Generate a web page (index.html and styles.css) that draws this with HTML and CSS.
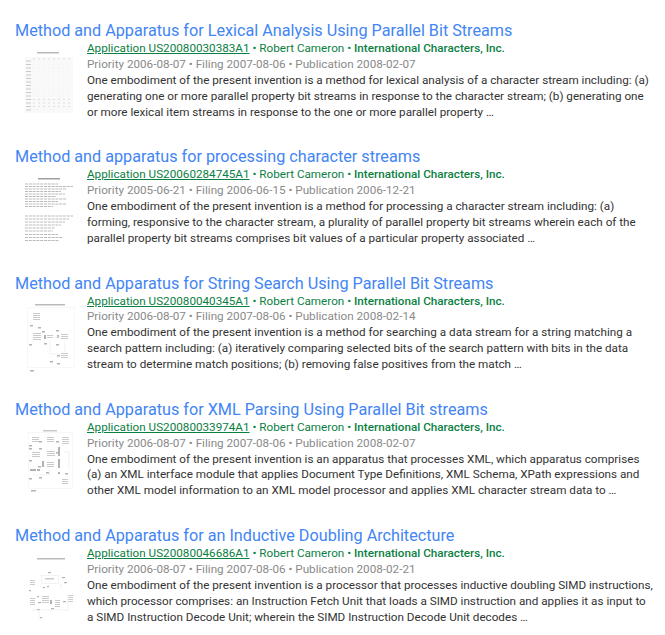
FILE: index.html
```html
<!DOCTYPE html>
<html lang="en">
<head>
<meta charset="utf-8">
<title>Patent results</title>
<link rel="stylesheet" href="styles.css">
</head>
<body>
<main class="results">
<article class="result">
  <h2 class="title">Method and Apparatus for Lexical Analysis Using Parallel Bit Streams</h2>
  <div class="row">
    <svg class="thumb" viewBox="0 0 52 72" aria-hidden="true">
      <rect x="14" y="0" width="22" height="1.5" fill="#aaa"/>
      <rect x="2" y="5" width="48" height="56" fill="#f8f8f8"/>
      <g stroke="#bdbdbd" stroke-width="1.1" stroke-dasharray="5 50"><path d="M3 9H50M3 12.500H50M3 16H50M3 19.500H50M3 23H50M3 26.500H50M3 30H50M3 33.500H50M3 37H50M3 40.500H50M3 44H50M3 47.500H50M3 51H50M3 54.500H50M3 58H50"/></g>
      <g stroke="#d8d8d8" stroke-width="1" stroke-dasharray="2 3"><path d="M10 7H50M10 47.500H50M10 51H50M10 54.500H50"/></g>
      <g stroke="#ececec" stroke-width=".8" stroke-dasharray="1 4"><path d="M10 12.500H50M10 16H50M10 19.500H50M10 23H50M10 26.500H50M10 30H50M10 33.500H50M10 37H50M10 40.500H50M10 44H50M10 58H50"/></g>
    </svg>
    <div class="info">
      <p class="meta"><a class="app" href="#">Application US20080030383A1</a> • Robert Cameron • <b>International Characters, Inc.</b></p>
      <p class="dates">Priority 2006-08-07 • Filing 2007-08-06 • Publication 2008-02-07</p>
      <p class="abstract">One embodiment of the present invention is a method for lexical analysis of a character stream including: (a) generating one or more parallel property bit streams in response to the character stream; (b) generating one or more lexical item streams in response to the one or more parallel property …</p>
    </div>
  </div>
</article>
<article class="result">
  <h2 class="title">Method and apparatus for processing character streams</h2>
  <div class="row">
    <svg class="thumb" viewBox="0 0 52 72" aria-hidden="true">
      <rect x="15" y="0" width="22" height="1.5" fill="#888"/>
      <g stroke="#aaa" stroke-width="1" stroke-dasharray="3 .8"><path d="M2 6H36M2 8.500H50M2 11H44M2 13.500H38M2 16H42M2 18.500H33M2 21H44M2 23.500H35M2 26H44M2 28.500H30M2 38H50M2 41H46M2 44H42M2 47H38M2 50H32M2 53H30M2 56.500H35M2 59.500H40M2 62.500H36"/></g>
    </svg>
    <div class="info">
      <p class="meta"><a class="app" href="#">Application US20060284745A1</a> • Robert Cameron • <b>International Characters, Inc.</b></p>
      <p class="dates">Priority 2005-06-21 • Filing 2006-06-15 • Publication 2006-12-21</p>
      <p class="abstract">One embodiment of the present invention is a method for processing a character stream including: (a) forming, responsive to the character stream, a plurality of parallel property bit streams wherein each of the parallel property bit streams comprises bit values of a particular property associated …</p>
    </div>
  </div>
</article>
<article class="result">
  <h2 class="title">Method and Apparatus for String Search Using Parallel Bit Streams</h2>
  <div class="row">
    <svg class="thumb" viewBox="0 0 52 72" aria-hidden="true">
      <rect x="12" y="0" width="30" height="1.5" fill="#aaa"/>
      <rect x="4.500" y="3.500" width="47" height="60" fill="none" stroke="#f6f6f6"/>
      <g fill="#bdbdbd"><rect x="10" y="9" width="7" height="1"/><rect x="10" y="11" width="7" height="1"/><rect x="10" y="13" width="7" height="1"/><rect x="10" y="15" width="7" height="1"/><rect x="10" y="29" width="8" height="1"/><rect x="10" y="31" width="8" height="1"/><rect x="10" y="33" width="8" height="1"/><rect x="10" y="35" width="8" height="1"/><rect x="24" y="31" width="6" height="1"/><rect x="24" y="33" width="6" height="1"/><rect x="38" y="30" width="7" height="1"/><rect x="38" y="32" width="7" height="1"/><rect x="38" y="34" width="7" height="1"/><rect x="38" y="49" width="7" height="1"/><rect x="38" y="51" width="7" height="1"/><rect x="38" y="53" width="7" height="1"/></g>
      <g fill="#a0a0a0"><rect x="7" y="21" width="3" height="1.500"/><rect x="15" y="23" width="3" height="1.500"/><rect x="19" y="27" width="3" height="1.500"/><rect x="21" y="31" width="2" height="4"/><rect x="33" y="26" width="3" height="1.500"/><rect x="34" y="31" width="2" height="3"/><rect x="6" y="40" width="3" height="1.500"/><rect x="21" y="39" width="3" height="1.500"/><rect x="33" y="40" width="3" height="1.500"/><rect x="27" y="57" width="3" height="1.500"/><rect x="34" y="51" width="3" height="1.500"/><rect x="34" y="59" width="3" height="1.500"/><rect x="7" y="66" width="4" height="1.500"/></g>
      <path d="M31 33H37M27 36V50H37M42 37V48" fill="none" stroke="#e6e6e6" stroke-width=".7"/>
    </svg>
    <div class="info">
      <p class="meta"><a class="app" href="#">Application US20080040345A1</a> • Robert Cameron • <b>International Characters, Inc.</b></p>
      <p class="dates">Priority 2006-08-07 • Filing 2007-08-06 • Publication 2008-02-14</p>
      <p class="abstract">One embodiment of the present invention is a method for searching a data stream for a string matching a search pattern including: (a) iteratively comparing selected bits of the search pattern with bits in the data stream to determine match positions; (b) removing false positives from the match …</p>
    </div>
  </div>
</article>
<article class="result">
  <h2 class="title">Method and Apparatus for XML Parsing Using Parallel Bit streams</h2>
  <div class="row">
    <svg class="thumb" viewBox="0 0 52 72" aria-hidden="true">
      <rect x="20" y="0" width="14" height="1.500" fill="#bbb"/>
      <rect x="5.500" y="2.500" width="44" height="56" fill="none" stroke="#f6f6f6"/>
      <g fill="#bdbdbd"><rect x="9" y="7" width="7" height="1"/><rect x="9" y="9" width="7" height="1"/><rect x="9" y="11" width="7" height="1"/><rect x="24" y="7" width="7" height="1"/><rect x="24" y="9" width="7" height="1"/><rect x="24" y="11" width="7" height="1"/><rect x="39" y="7" width="7" height="1"/><rect x="39" y="9" width="7" height="1"/><rect x="39" y="11" width="7" height="1"/><rect x="39" y="13" width="7" height="1"/><rect x="9" y="22" width="8" height="1"/><rect x="9" y="24" width="8" height="1"/><rect x="9" y="26" width="8" height="1"/><rect x="24" y="21" width="8" height="1"/><rect x="24" y="23" width="8" height="1"/><rect x="24" y="25" width="8" height="1"/><rect x="24" y="32" width="7" height="1"/><rect x="24" y="34" width="7" height="1"/><rect x="24" y="36" width="7" height="1"/><rect x="39" y="49" width="6" height="1"/><rect x="39" y="51" width="6" height="1"/><rect x="39" y="53" width="6" height="1"/></g>
      <g fill="#a0a0a0"><rect x="6" y="15" width="3" height="1.500"/><rect x="16" y="11" width="3" height="1.500"/><rect x="33" y="11" width="3" height="1.500"/><rect x="6" y="18" width="3" height="1.500"/><rect x="16" y="18" width="3" height="1.500"/><rect x="33" y="22" width="3" height="1.500"/><rect x="35" y="17" width="2" height="9"/><rect x="35" y="29" width="2" height="9"/><rect x="6" y="30" width="3" height="1.500"/><rect x="15" y="36" width="3" height="1.500"/><rect x="19" y="31" width="2" height="6"/><rect x="7" y="39" width="6" height="2"/><rect x="14" y="39" width="3" height="2"/><rect x="23" y="42" width="3" height="1.500"/><rect x="35" y="42" width="2" height="2"/><rect x="42" y="43" width="3" height="1.500"/><rect x="6" y="48" width="3" height="1.500"/><rect x="16" y="47" width="3" height="1.500"/><rect x="8" y="60" width="5" height="1.500"/></g>
      <path d="M11 45H27V40M41 22H46V40" fill="none" stroke="#e6e6e6" stroke-width=".7"/>
    </svg>
    <div class="info">
      <p class="meta"><a class="app" href="#">Application US20080033974A1</a> • Robert Cameron • <b>International Characters, Inc.</b></p>
      <p class="dates">Priority 2006-08-07 • Filing 2007-08-06 • Publication 2008-02-07</p>
      <p class="abstract">One embodiment of the present invention is an apparatus that processes XML, which apparatus comprises (a) an XML interface module that applies Document Type Definitions, XML Schema, XPath expressions and other XML model information to an XML model processor and applies XML character stream data to …</p>
    </div>
  </div>
</article>
<article class="result">
  <h2 class="title">Method and Apparatus for an Inductive Doubling Architecture</h2>
  <div class="row">
    <svg class="thumb" viewBox="0 0 52 72" aria-hidden="true">
      <rect x="14" y="1" width="28" height="1.500" fill="#aaa"/>
      <rect x="18.500" y="18.500" width="17" height="8" fill="none" stroke="#e8e8e8" stroke-width=".7"/>
      <rect x="22" y="21" width="9" height="1.500" fill="#c0c0c0"/>
      <g fill="#bdbdbd"><rect x="7" y="23" width="5" height="1"/><rect x="7" y="25" width="5" height="1"/><rect x="7" y="27" width="5" height="1"/><rect x="7" y="41" width="5" height="1"/><rect x="7" y="43" width="5" height="1"/><rect x="7" y="45" width="5" height="1"/><rect x="7" y="47" width="5" height="1"/><rect x="19" y="39" width="7" height="1"/><rect x="19" y="41" width="7" height="1"/><rect x="19" y="43" width="7" height="1"/><rect x="19" y="45" width="7" height="1"/><rect x="32" y="43" width="5" height="1"/><rect x="32" y="45" width="5" height="1"/><rect x="32" y="47" width="5" height="1"/><rect x="32" y="49" width="5" height="1"/><rect x="45" y="38" width="5" height="1"/><rect x="45" y="40" width="5" height="1"/><rect x="45" y="42" width="5" height="1"/><rect x="45" y="44" width="5" height="1"/></g>
      <g fill="#a0a0a0"><rect x="25" y="15" width="3" height="1.200"/><rect x="39" y="20" width="3" height="1.200"/><rect x="41" y="25" width="3" height="1.200"/><rect x="20" y="30" width="2" height="1.200"/><rect x="24" y="29" width="2" height="1.200"/><rect x="6" y="33" width="2" height="1.200"/><rect x="14" y="39" width="2" height="1.200"/><rect x="15" y="45" width="3" height="1.200"/><rect x="27" y="43" width="2" height="4"/><rect x="40" y="44" width="3" height="1.200"/><rect x="14" y="52" width="3" height="1.200"/><rect x="28" y="51" width="3" height="1.200"/><rect x="17" y="60" width="2" height="1.200"/></g>
      <path d="M9 53H45V37M16 53V62H20M38 27V32" fill="none" stroke="#e6e6e6" stroke-width=".7"/>
    </svg>
    <div class="info">
      <p class="meta"><a class="app" href="#">Application US20080046686A1</a> • Robert Cameron • <b>International Characters, Inc.</b></p>
      <p class="dates">Priority 2006-08-07 • Filing 2007-08-06 • Publication 2008-02-21</p>
      <p class="abstract">One embodiment of the present invention is a processor that processes inductive doubling SIMD instructions, which processor comprises: an Instruction Fetch Unit that loads a SIMD instruction and applies it as input to a SIMD Instruction Decode Unit; wherein the SIMD Instruction Decode Unit decodes …</p>
    </div>
  </div>
</article>
</main>
</body>
</html>
```
FILE: styles.css
```css
* { box-sizing: border-box; }
html, body { margin: 0; background: #fff; }
body { font-family: Roboto, "Liberation Sans", sans-serif; overflow: hidden; }
.results { padding: 20px 0 0 15px; width: 665px; }
.result { height: 126.25px; }
.title { margin: 0; font-size: 16.2px; font-weight: 400; line-height: 21px; color: #4285f4; white-space: nowrap; }
.row { display: flex; gap: 12px; }
.thumb { width: 52px; height: 72px; flex: none; margin: 10.5px 0 0 8px; filter: blur(.55px); opacity: .8; }
.info { flex: 1; min-width: 0; font-size: 11.7px; line-height: 15.9px; }
.info p { margin: 0; }
.meta { color: #0b8043; white-space: nowrap; }
.app { color: #0b8043; text-decoration: underline; }
.meta b { font-weight: 500; }
.dates { color: #8a8a8a; }
.abstract { color: #333; width: 567px; }
```
